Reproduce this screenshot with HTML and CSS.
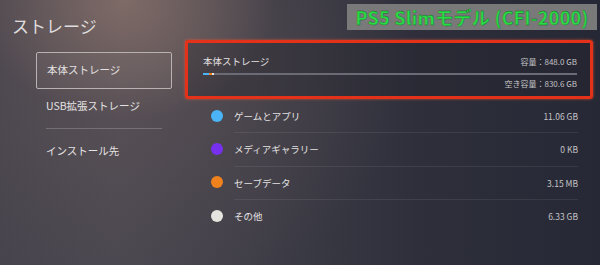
FILE: index.html
```html
<!DOCTYPE html>
<html lang="ja">
<head>
    <meta charset="UTF-8">
    <title>ストレージ</title>
    <link rel="stylesheet" href="styles.css">
</head>
<body>
    <div class="screen">

        <aside class="sidebar">
            <h1>ストレージ</h1>
            <nav class="menu">
                <div class="menu-item selected">本体ストレージ</div>
                <div class="menu-item">USB拡張ストレージ</div>
                <div class="menu-sep"></div>
                <div class="menu-item">インストール先</div>
            </nav>
        </aside>

        <main class="main">
            <section class="summary">
                <div class="summary-row">
                    <span>本体ストレージ</span>
                    <span class="small">容量：848.0 GB</span>
                </div>
                <div class="bar">
                    <span class="seg blue" style="width: 6px"></span>
                    <span class="seg orange" style="width: 3px"></span>
                    <span class="seg white" style="width: 2px"></span>
                </div>
                <div class="summary-row end">
                    <span class="small">空き容量：830.6 GB</span>
                </div>
            </section>

            <ul class="usage">
                <li><i class="dot blue"></i><span class="name">ゲームとアプリ</span><span class="size">11.06 GB</span></li>
                <li><i class="dot purple"></i><span class="name">メディアギャラリー</span><span class="size">0 KB</span></li>
                <li><i class="dot orange"></i><span class="name">セーブデータ</span><span class="size">3.15 MB</span></li>
                <li><i class="dot white"></i><span class="name">その他</span><span class="size">6.33 GB</span></li>
            </ul>
        </main>

        <div class="model-tag">PS5 Slimモデル (CFI-2000)</div>
    </div>
</body>
</html>
```

FILE: styles.css
```css
:root {
    --text: #e4e2e2;
    --muted: #c4c2c6;
    --red: #e4321a;
    --blue: #4bb4f6;
    --purple: #7630ee;
    --orange: #f0821e;
    --white: #e6e4de;
}

* {
    margin: 0;
    padding: 0;
    box-sizing: border-box;
}

body {
    width: 600px;
    height: 265px;
    overflow: hidden;
    font-family: "Noto Sans CJK JP", "Noto Sans", sans-serif;
    color: var(--text);
    background: #2a2b36;
}

.screen {
    position: relative;
    display: flex;
    width: 600px;
    height: 265px;
    background:
        radial-gradient(ellipse 150px 120px at 125px 0px, rgba(160, 130, 118, 0.55), rgba(160, 130, 118, 0) 100%),
        radial-gradient(ellipse 260px 240px at 150px 60px, rgba(120, 100, 98, 0.35), rgba(120, 100, 98, 0) 100%),
        linear-gradient(to right, #47444d 0%, #4a4750 20%, #3d3c46 45%, #2e2f3b 70%, #262835 100%);
}

/* left column */
.sidebar {
    width: 185px;
    flex-shrink: 0;
    padding-top: 14px;
}

.sidebar h1 {
    font-size: 17px;
    font-weight: 400;
    line-height: 24px;
    padding-left: 12px;
    color: #dedcdc;
}

.menu {
    margin: 14px 0 0 36px;
    width: 136px;
}

.menu-item {
    font-size: 10.5px;
    line-height: 34px;
    padding-left: 10px;
}

.menu-item.selected {
    height: 37px;
    border: 1.5px solid #b9b2b3;
    border-radius: 2px;
    background: rgba(255, 255, 255, 0.03);
}

.menu-sep {
    height: 1px;
    margin: 5px 10px 5px 10px;
    background: rgba(255, 255, 255, 0.2);
}

/* right column */
.main {
    flex: 1;
    padding: 40px 7px 0 0;
}

.summary {
    height: 59px;
    border: 3px solid var(--red);
    border-radius: 3px;
    box-shadow: 0 0 3px rgba(255, 90, 50, 0.7);
    background: rgba(34, 34, 44, 0.35);
    padding: 10px 13px 0 15px;
}

.summary-row {
    display: flex;
    justify-content: space-between;
    align-items: center;
    height: 16px;
    font-size: 9.5px;
}

.summary-row.end {
    justify-content: flex-end;
}

.small {
    font-size: 8px;
    color: var(--muted);
}

.bar {
    display: flex;
    height: 2px;
    margin-top: 4px;
    background: #6b6b75;
}

.seg {
    height: 100%;
}

.seg.blue { background: var(--blue); }
.seg.orange { background: var(--orange); }
.seg.white { background: var(--white); }

.usage {
    list-style: none;
    margin: 0 15px 0 26px;
}

.usage li {
    display: flex;
    align-items: center;
    height: 33.3px;
    font-size: 9.5px;
}

.usage li + li .name,
.usage li + li .size {
    border-top: 1px solid rgba(255, 255, 255, 0.08);
}

.dot {
    width: 12px;
    height: 12px;
    border-radius: 50%;
    flex-shrink: 0;
    margin-right: 11px;
}

.dot.blue { background: var(--blue); }
.dot.purple { background: var(--purple); }
.dot.orange { background: var(--orange); }
.dot.white { background: var(--white); }

.usage .name,
.usage .size {
    height: 100%;
    display: flex;
    align-items: center;
}

.usage .name {
    flex: 1;
}

.usage .size {
    font-size: 8.5px;
    color: var(--muted);
}

/* annotation label laid over the screenshot */
.model-tag {
    position: absolute;
    top: 4px;
    left: 347px;
    width: 250px;
    height: 26px;
    background: rgba(125, 125, 125, 0.95);
    color: #27dc45;
    font-family: "Noto Sans CJK JP", sans-serif;
    font-weight: 700;
    font-size: 18px;
    letter-spacing: 0.3px;
    line-height: 26px;
    text-align: center;
    -webkit-text-stroke: 0.3px #1c5a22;
    white-space: nowrap;
}
```
